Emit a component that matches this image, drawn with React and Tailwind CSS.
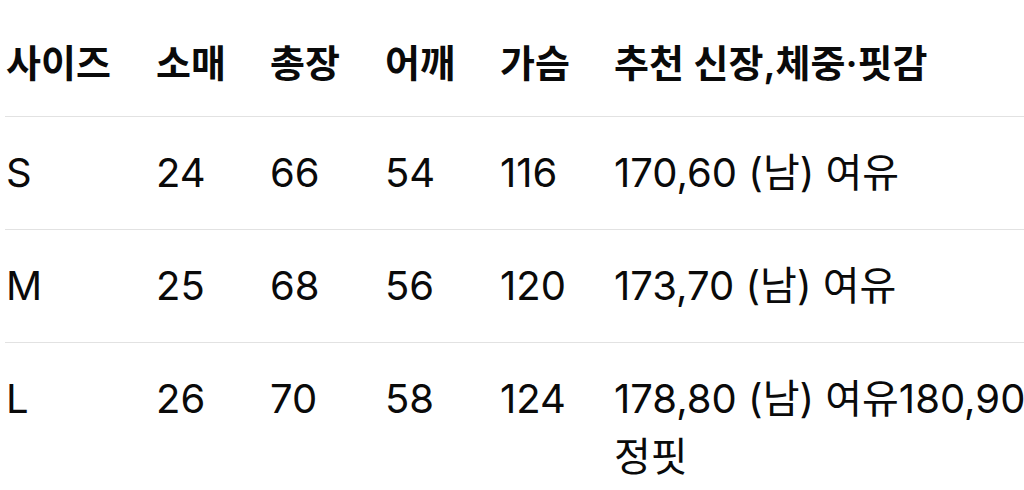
import React from "react";

const cols = ["w-[150px]", "w-[114px]", "w-[115px]", "w-[115px]", "w-[114px]", "w-[440px]"];

const header = ["사이즈", "소매", "총장", "어깨", "가슴", "추천 신장,체중·핏감"];
const rows = [
  ["S", "24", "66", "54", "116", "170,60 (남) 여유"],
  ["M", "25", "68", "56", "120", "173,70 (남) 여유"],
  ["L", "26", "70", "58", "124", "178,80 (남) 여유180,90 정핏"],
];

function Row({ cells, head, last }) {
  return (
    <div
      className={
        "flex shrink-0 " +
        (last ? "" : "border-b border-[#e2e2e2] ") +
        (head ? "font-semibold text-[38px] pt-[34px] pb-[24px]" : "text-[40px] pt-[27px] pb-[27px]")
      }
    >
      {cells.map((c, i) => (
        <div key={i} className={cols[i] + " shrink-0 pl-[1px] break-keep leading-[58px]"}>
          {c}
        </div>
      ))}
    </div>
  );
}

export default function App() {
  return (
    <div className="w-[1024px] h-[490px] overflow-hidden bg-white">
      <div
        className="ml-[5px] w-[1100px] text-[#0a0a0a]"
        style={{ fontFamily: 'Inter, "Noto Sans CJK KR", sans-serif' }}
      >
        <Row cells={header} head />
        {rows.map((r, i) => (
          <Row key={i} cells={r} last={i === rows.length - 1} />
        ))}
      </div>
    </div>
  );
}
